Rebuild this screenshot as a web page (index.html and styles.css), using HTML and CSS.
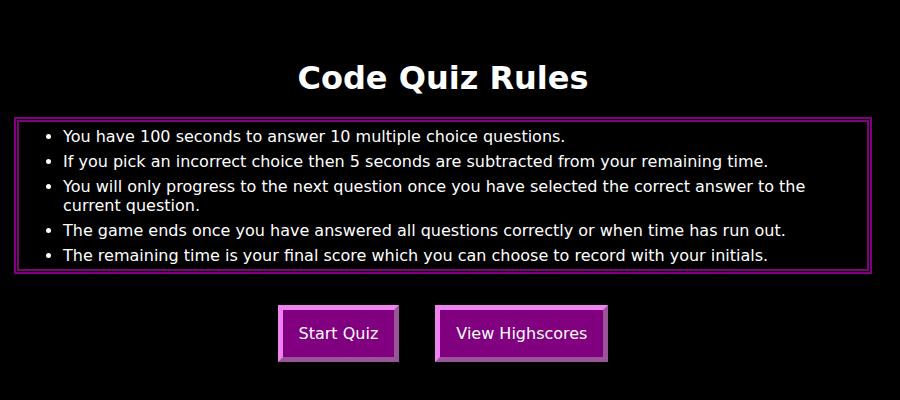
FILE: index.html
```html
<!DOCTYPE html>
<html lang="en">
<head>
<meta charset="utf-8">
<title>Code Quiz</title>
<link rel="stylesheet" href="styles.css">
</head>
<body>
<main class="page">
  <h1 class="title">Code Quiz Rules</h1>
  <div class="rules">
    <ul class="rules-list">
      <li>You have 100 seconds to answer 10 multiple choice questions.</li>
      <li>If you pick an incorrect choice then 5 seconds are subtracted from your remaining time.</li>
      <li>You will only progress to the next question once you have selected the correct answer to the current question.</li>
      <li>The game ends once you have answered all questions correctly or when time has run out.</li>
      <li>The remaining time is your final score which you can choose to record with your initials.</li>
    </ul>
  </div>
  <div class="actions">
    <button class="btn">Start Quiz</button>
    <button class="btn">View Highscores</button>
  </div>
</main>
</body>
</html>
```
FILE: styles.css
```css
html, body {
  margin: 0;
  padding: 0;
  background: #000;
  color: #fff;
  font-family: "DejaVu Sans", Verdana, sans-serif;
  font-size: 16px;
}
.page {
  margin: 0 28px 0 14px;
  padding-top: 60px;
}
.title {
  margin: 0 0 20px;
  font-size: 32px;
  line-height: 37px;
  font-weight: bold;
  text-align: center;
}
.rules {
  border: 5px double #800080;
}
.rules-list {
  margin: 0;
  padding: 5px 0 4px 44px;
  line-height: 19px;
}
.rules-list li {
  margin-bottom: 6px;
}
.rules-list li:last-child {
  margin-bottom: 0;
}
.actions {
  display: flex;
  justify-content: center;
  gap: 36px;
  margin-top: 31px;
}
.btn {
  font-family: "DejaVu Sans", Verdana, sans-serif;
  font-size: 16px;
  line-height: 19px;
  color: #fff;
  background: #800080;
  border: 5px outset #ee82ee;
  padding: 14px 16px;
}
```
